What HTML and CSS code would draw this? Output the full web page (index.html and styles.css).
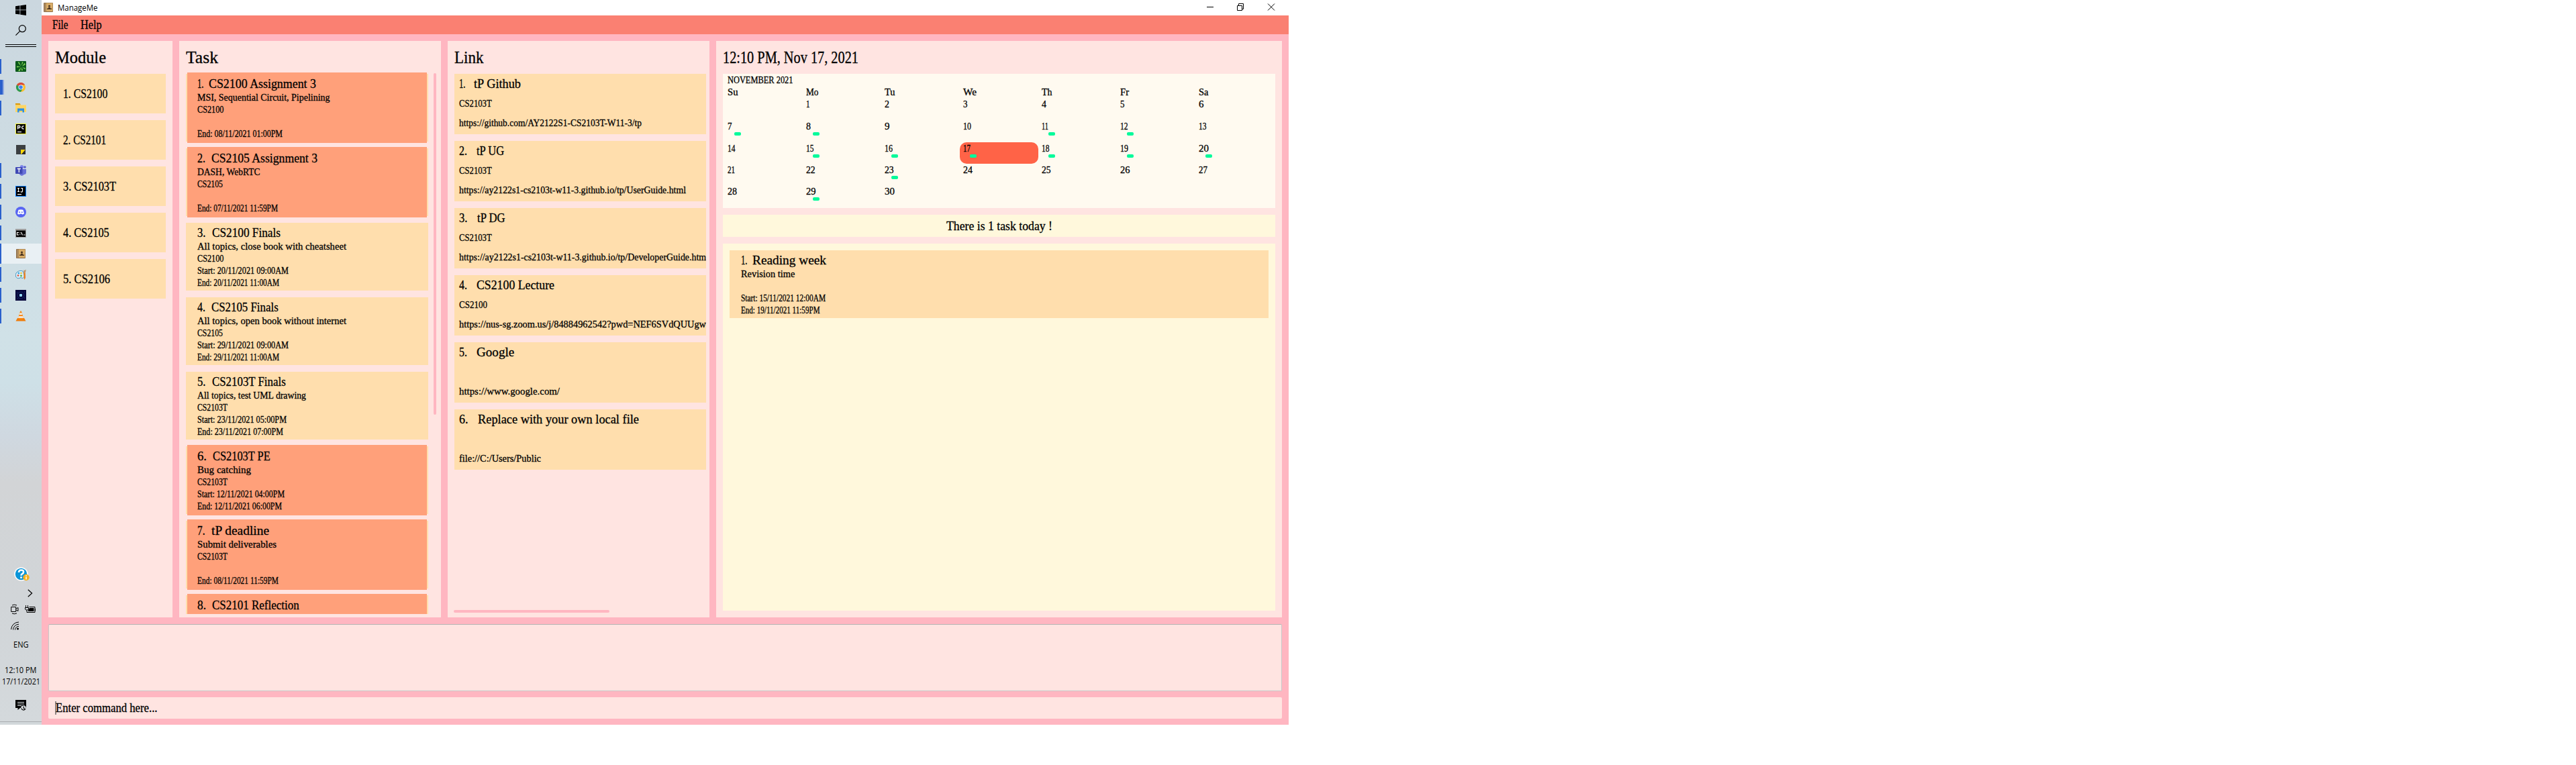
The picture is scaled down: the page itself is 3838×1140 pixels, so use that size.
FILE: index.html
```html
<!DOCTYPE html>
<html lang="en">
<head>
<meta charset="utf-8">
<title>ManageMe</title>
<link rel="stylesheet" href="styles.css">
</head>
<body>
<svg width="0" height="0" class="defs">
  <symbol id="book" viewBox="0 0 14 14"><rect width="14" height="14" rx="1" fill="#8a6a45"/><rect x="1" y="0.5" width="2" height="13" fill="#a98960"/><rect x="3.5" y="0.5" width="10" height="12.5" fill="#d9ad68"/><circle cx="8.5" cy="5" r="1.6" fill="#4a3420"/><path d="M5 10V8.400h2V7h3v1.400h2V10z" fill="#4a3420"/></symbol>
</svg>
<div class="screen">
  <aside class="taskbar">
    <svg class="win" viewBox="0 0 16 16"><path d="M0 2.200 6.500 1.300V7.500H0zM7.300 1.200 16 0v7.500H7.300zM0 8.300h6.500v6.300L0 13.700zM7.300 8.300H16V16l-8.700-1.200z"/></svg>
    <svg class="search" viewBox="0 0 16 16" fill="none" stroke="#000" stroke-width="1.200"><circle cx="10.300" cy="5.700" r="5"/><path d="M6.700 9.300.4 15.600"/></svg>
    <div class="grip"></div>
    <div class="apps">
      <div class="app run"><svg viewBox="0 0 16 16"><rect width="16" height="16" rx="1" fill="#0d5a1c"/><path d="M4 2.500 8.500 8 5 .8zM2 7.500l6 1-6 1zM4 14.500 8.500 9l-2 6zM9 14l.3-5 1.700 5zM14.500 12.500 10 9l4.800 1.500zM15 5l-5 3 3.500-5zM9 7 10 1l1.500 1z" fill="#86d957"/></svg></div>
      <div class="app run more"><svg viewBox="0 0 16 16"><circle cx="8" cy="8" r="7" fill="#fbc02d"/><path d="M8 8 1.900 4.500A7 7 0 0 1 14.100 4.500H8z" fill="#d9483b"/><path d="M1.900 4.500A7 7 0 0 0 8 15l3-5.300L8 8z" fill="#2a9a55"/><circle cx="8" cy="8" r="3.600" fill="#fff"/><circle cx="8" cy="8" r="2.800" fill="#3f83f0"/></svg></div>
      <div class="app run"><svg viewBox="0 0 16 16"><path d="M0 1h6.500l1.500 2.500H0z" fill="#dc9a08"/><path d="M0 3.500h16V14H0z" fill="#ffd563"/><path d="M3 14.500V8.500h10v6h-2.500V12h-5v2.500z" fill="#2f8fe0"/></svg></div>
      <div class="app"><svg viewBox="0 0 16 16"><rect x=".5" y=".5" width="15" height="15" stroke="#f3f03a"/><path d="M3.500 8.500v-5h2a1.400 1.400 0 0 1 0 3h-2M12.500 4.200a2 2 0 1 0 0 3.600" stroke="#fff" fill="none" stroke-width="1.300"/><path d="M3 12h6v1.200H3z" fill="#fff"/></svg></div>
      <div class="app"><svg viewBox="0 0 16 16"><path d="M1 1h14v14H1z" fill="#3c3f41"/><path d="M8 8h7l-5.500 6.500H8z" fill="#ffd60a"/><path d="m15 8-6 7h6z" fill="#2b2b2b"/></svg></div>
      <div class="app run"><svg viewBox="0 0 16 16"><circle cx="14" cy="3" r="1.800" fill="#5059c9"/><circle cx="9.500" cy="2.800" r="2.700" fill="#7b83eb"/><path d="M7 6h9v5a3 3 0 0 1-3 3q-2 2-4 2l-3-2z" fill="#6870d6"/><rect y="3" width="10.500" height="10" rx=".8" fill="#4049b5"/><path d="M2.800 5.500h5M5.300 5.500v5.500" stroke="#fff" stroke-width="1.300"/></svg></div>
      <div class="app run"><svg viewBox="0 0 16 16"><rect x=".5" y=".5" width="15" height="15" stroke="#087cfa"/><path d="M3 3.500h3M4.500 3.500v5M3 8.500h3M8 3.500h2.500v3.800a1.300 1.300 0 0 1-2.600 1" stroke="#fff" fill="none" stroke-width="1.200"/><path d="M3 12h6v1.200H3z" fill="#fff"/></svg></div>
      <div class="app run"><svg viewBox="0 0 16 16"><circle cx="8" cy="8" r="8" fill="#5865f2"/><path d="M4.500 4.700Q8 3.800 11.500 4.700L13 10.500l-2.500 1.200-.8-1H6.300l-.8 1L3 10.500z" fill="#fff"/><circle cx="6.200" cy="8.200" r="1" fill="#5865f2"/><circle cx="9.800" cy="8.200" r="1" fill="#5865f2"/></svg></div>
      <div class="app run"><svg viewBox="0 0 16 16"><path d="M0 2h16v13H0z" fill="#a0a0a0"/><path d="M1 4.500h14V14H1z"/><path d="M5 7.500H2.500V11H5M6.800 7.500v1m0 1.500v1M8.500 7l2 4.500M12 11h2.500" stroke="#fff" fill="none" stroke-width="1.100"/></svg></div>
      <div class="app run active"><svg viewBox="-1 -1 16 16"><use href="#book" width="14" height="14"/></svg></div>
      <div class="app run"><svg viewBox="0 0 16 16"><path d="M1 6q4-5 10-3l2 6q1 4-3 4.500-2-2-4 0-4 1-5.500-2.500Q0 8 1 6z" fill="#d9eef8" stroke="#4f9ac2"/><circle cx="4" cy="9.500" r="1.300" fill="#e24a33"/><circle cx="8.500" cy="6" r="1.300" fill="#f2c230"/><circle cx="4.800" cy="6" r="1.300" fill="#2e9cd6"/><circle cx="8.500" cy="10" r="1.400" fill="#5fae3b"/><path d="m12.600 5-.3-3.500L14 2l1.500-1.500V3l-1 2z" fill="#c09060"/><path d="M12.500 5h2.200l.3 8-1.500 3-1-3z" fill="#ee7d1c"/></svg></div>
      <div class="app run"><svg viewBox="0 0 16 16"><path d="M0 0h16v16H0z" fill="#05063a"/><circle cx="8" cy="8" r="5" fill="none" stroke="#1d3a78" stroke-width=".7"/><path d="M2 4h1M13 3h1M3 13h1M13 12h1" stroke="#2b4a88"/><rect x="6" y="6" width="4" height="4" rx="1" fill="#8fd8f4"/></svg></div>
      <div class="app run"><svg viewBox="0 0 16 16"><path d="M3 11h10l2.500 4.500H.5z" fill="#ef7c0a"/><path d="M7.200.5h1.600L12.500 12q-4.500 2-9 0z" fill="#f58a1a"/><path d="M6.500 3.500h3l.9 2.500H5.600zM4.700 8.200h6.600l.8 2.600H3.900z" fill="#f2f2f2"/></svg></div>
    </div>
    <div class="tray">
      <svg class="help" viewBox="0 0 23 22"><circle cx="10.500" cy="10.500" r="10.300" fill="#fff"/><circle cx="10.500" cy="10.500" r="8.700" fill="#0a95d8"/><path d="M7 8q0-3.500 3.700-3.500T14 7.500q0 1.800-2 2.700-1.500.8-1.500 2.500" fill="none" stroke="#fff" stroke-width="2.600"/><circle cx="10.500" cy="15.600" r="1.500" fill="#fff"/><circle cx="18" cy="15.500" r="4.700" fill="#f5b01e"/><path d="M18 14.500v4M18 12v1.500" stroke="#fff" stroke-width="1.500"/></svg>
      <svg class="chev" viewBox="0 0 8 12" fill="none" stroke="#000" stroke-width="1.200"><path d="m.8.800 5.800 5.200L.8 11.200"/></svg>
      <div class="pair">
        <svg width="12" height="16" viewBox="0 0 12 16" fill="none" stroke="#000"><path d="M2 2Q5 .2 9 2M2 14q3 1.800 7 0M.7 4.500h7v7h-7zM8 7l3-1.500v5L8 9"/></svg>
        <svg width="17" height="12" viewBox="0 0 17 12"><path d="M1.500 0v3m3-3v3M.5 3.500h5V6L4 7H2L.5 6zM3 7v3.500h3" fill="none" stroke="#000"/><path d="M6.500 2.500h8.500v8H5.500M15.500 5v3.500" fill="none" stroke="#000"/><path d="M7 4h6.500v5H5V7z"/></svg>
      </div>
      <svg class="wifi" viewBox="0 0 13 13" fill="none" stroke="#000"><path d="M.6 12A11.500 11.500 0 0 1 12 1M3.600 12.500A8.500 8.500 0 0 1 12 4.200M6.500 12.600A5.500 5.500 0 0 1 12 7.300"/><circle cx="10.500" cy="11" r="1.500" fill="#000" stroke="none"/></svg>
      <div class="lang"><span data-w="22.500">ENG</span></div>
      <div class="clock"><span data-w="47.500">12:10 PM</span></div>
      <div class="clock"><span data-w="57">17/11/2021</span></div>
      <svg class="note" viewBox="0 0 16 16"><path d="M0 0h16v12H7l-3.500 3V12H0z"/><path d="M3 3.500h10M3 6h10M3 8.500h6" stroke="#d3d8db"/><circle cx="12" cy="12" r="3.800" fill="#d3d8db"/><path d="M9 12.500a3 3 0 0 0 5.500 1.200Q12 13.800 12.200 9.600" fill="none" stroke="#000" stroke-width="1.200"/></svg>
    </div>
  </aside>
  <main class="window">
    <header class="titlebar">
      <svg class="logo"><use href="#book" width="14" height="14"/></svg>
      <div class="name"><span data-w="59.500">ManageMe</span></div>
      <svg class="ctl" viewBox="0 0 102 12" fill="none" stroke="#000"><path d="M0 6.500h10M45.500 4.500h7v7h-7zM47.500 4.500v-3h7v8h-2M91 1.500l10 10M101 1.500l-10 10"/></svg>
    </header>
    <nav class="menu"><span data-w="23.500">File</span><span data-w="31.500">Help</span></nav>
    <div class="panels">
      <section class="panel modules">
        <h2><span data-w="76">Module</span></h2>
        <div class="list">
          <div class="module"><span data-w="66.300">1. CS2100</span></div>
          <div class="module"><span data-w="64">2. CS2101</span></div>
          <div class="module"><span data-w="79">3. CS2103T</span></div>
          <div class="module"><span data-w="68.700">4. CS2105</span></div>
          <div class="module"><span data-w="70">5. CS2106</span></div>
        </div>
      </section>
      <section class="panel tasks">
        <h2><span data-w="48">Task</span></h2>
        <div class="scroll">
          <div class="list">
            <article class="task late"><h3><span data-w="8">1.</span><span data-w="160">CS2100 Assignment 3</span></h3><p class="desc"><span data-w="197.500">MSI, Sequential Circuit, Pipelining</span></p><p><span data-w="39.500">CS2100</span></p><p></p><p><span data-w="127">End: 08/11/2021 01:00PM</span></p></article>
            <article class="task late"><h3><span data-w="12">2.</span><span data-w="158">CS2105 Assignment 3</span></h3><p class="desc"><span data-w="93.500">DASH, WebRTC</span></p><p><span data-w="38">CS2105</span></p><p></p><p><span data-w="120">End: 07/11/2021 11:59PM</span></p></article>
            <article class="task"><h3><span data-w="12.500">3.</span><span data-w="102">CS2100 Finals</span></h3><p class="desc"><span data-w="222">All topics, close book with cheatsheet</span></p><p><span data-w="39.500">CS2100</span></p><p><span data-w="136">Start: 20/11/2021 09:00AM</span></p><p><span data-w="122">End: 20/11/2021 11:00AM</span></p></article>
            <article class="task"><h3><span data-w="12">4.</span><span data-w="99.700">CS2105 Finals</span></h3><p class="desc"><span data-w="222">All topics, open book without internet</span></p><p><span data-w="38">CS2105</span></p><p><span data-w="136">Start: 29/11/2021 09:00AM</span></p><p><span data-w="122">End: 29/11/2021 11:00AM</span></p></article>
            <article class="task"><h3><span data-w="12.500">5.</span><span data-w="109.700">CS2103T Finals</span></h3><p class="desc"><span data-w="162">All topics, test UML drawing</span></p><p><span data-w="45">CS2103T</span></p><p><span data-w="133">Start: 23/11/2021 05:00PM</span></p><p><span data-w="128">End: 23/11/2021 07:00PM</span></p></article>
            <article class="task late"><h3><span data-w="14">6.</span><span data-w="85.700">CS2103T PE</span></h3><p class="desc"><span data-w="80">Bug catching</span></p><p><span data-w="45">CS2103T</span></p><p><span data-w="130">Start: 12/11/2021 04:00PM</span></p><p><span data-w="126">End: 12/11/2021 06:00PM</span></p></article>
            <article class="task late"><h3><span data-w="11.500">7.</span><span data-w="86">tP deadline</span></h3><p class="desc"><span data-w="118">Submit deliverables</span></p><p><span data-w="45">CS2103T</span></p><p></p><p><span data-w="121">End: 08/11/2021 11:59PM</span></p></article>
            <article class="task late"><h3><span data-w="13">8.</span><span data-w="129.700">CS2101 Reflection</span></h3></article>
          </div>
          <div class="vbar"></div>
        </div>
      </section>
      <section class="panel links">
        <h2><span data-w="43.500">Link</span></h2>
        <div class="list">
          <article class="link"><h3><span data-w="8">1.</span><span data-w="70">tP Github</span></h3><p class="mod"><span data-w="48.700">CS2103T</span></p><p><span data-w="272">https://github.com/AY2122S1-CS2103T-W11-3/tp</span></p></article>
          <article class="link"><h3><span data-w="12">2.</span><span data-w="41.300">tP UG</span></h3><p class="mod"><span data-w="48.700">CS2103T</span></p><p><span data-w="338">https://ay2122s1-cs2103t-w11-3.github.io/tp/UserGuide.html</span></p></article>
          <article class="link"><h3><span data-w="12.500">3.</span><span data-w="41.700">tP DG</span></h3><p class="mod"><span data-w="48.700">CS2103T</span></p><p><span data-w="372">https://ay2122s1-cs2103t-w11-3.github.io/tp/DeveloperGuide.html</span></p></article>
          <article class="link"><h3><span data-w="12">4.</span><span data-w="116">CS2100 Lecture</span></h3><p class="mod"><span data-w="42">CS2100</span></p><p><span data-w="368">https://nus-sg.zoom.us/j/84884962542?pwd=NEF6SVdQUUgw</span></p></article>
          <article class="link"><h3><span data-w="12">5.</span><span data-w="56.300">Google</span></h3><p class="mod"></p><p><span data-w="150">https://www.google.com/</span></p></article>
          <article class="link"><h3><span data-w="13.500">6.</span><span data-w="240">Replace with your own local file</span></h3><p class="mod"></p><p><span data-w="122">file://C:/Users/Public</span></p></article>
        </div>
        <div class="hbar"></div>
      </section>
      <section class="panel today">
        <h2><span data-w="202">12:10 PM, Nov 17, 2021</span></h2>
        <div class="calendar">
          <div class="month"><span data-w="97.500">NOVEMBER 2021</span></div>
          <div class="week head"><div><span data-w="15.500">Su</span></div><div><span data-w="18.500">Mo</span></div><div><span data-w="15.500">Tu</span></div><div><span data-w="20">We</span></div><div><span data-w="15.500">Th</span></div><div><span data-w="13">Fr</span></div><div><span data-w="14.500">Sa</span></div></div>
          <div class="week tall"><div></div><div><span data-w="5.500">1</span></div><div><span data-w="7">2</span></div><div><span data-w="6.500">3</span></div><div><span data-w="7">4</span></div><div><span data-w="6.500">5</span></div><div><span data-w="7.500">6</span></div></div>
          <div class="week tall"><div class="busy"><span data-w="6.500">7</span></div><div class="busy"><span data-w="7">8</span></div><div><span data-w="7.500">9</span></div><div><span data-w="12">10</span></div><div class="busy"><span data-w="9">11</span></div><div class="busy"><span data-w="11.500">12</span></div><div><span data-w="11.500">13</span></div></div>
          <div class="week"><div><span data-w="11.500">14</span></div><div class="busy"><span data-w="11.500">15</span></div><div class="busy"><span data-w="12">16</span></div><div class="busy now"><span data-w="11">17</span></div><div class="busy"><span data-w="11.500">18</span></div><div class="busy"><span data-w="12">19</span></div><div class="busy"><span data-w="15">20</span></div></div>
          <div class="week"><div><span data-w="11">21</span></div><div><span data-w="13.700">22</span></div><div class="busy"><span data-w="13.700">23</span></div><div><span data-w="14">24</span></div><div><span data-w="13.700">25</span></div><div><span data-w="14.500">26</span></div><div><span data-w="13">27</span></div></div>
          <div class="week"><div><span data-w="14">28</span></div><div class="busy"><span data-w="14.500">29</span></div><div><span data-w="15">30</span></div><div></div><div></div><div></div><div></div></div>
        </div>
        <div class="notice"><span data-w="158">There is 1 task today !</span></div>
        <div class="agenda">
          <article class="task"><h3><span data-w="8">1.</span><span data-w="110">Reading week</span></h3><p class="desc"><span data-w="80.300">Revision time</span></p><p></p><p><span data-w="126">Start: 15/11/2021 12:00AM</span></p><p><span data-w="117.500">End: 19/11/2021 11:59PM</span></p></article>
        </div>
      </section>
    </div>
    <div class="result"></div>
    <div class="command"><i class="caret"></i><span data-w="151.500">Enter command here...</span></div>
  </main>
</div>
<script src="fit.js"></script>
</body>
</html>
```
FILE: fit.js
```js
// Condense each label to the width given in its data-w attribute,
// but never squeeze the glyphs below two thirds of their natural width.
document.querySelectorAll('[data-w]').forEach(function (el) {
  var natural = el.getBoundingClientRect().width;
  var target = parseFloat(el.dataset.w);
  el.style.transform = 'scaleX(' + Math.max(target / natural, 0.67) + ')';
  el.style.marginRight = (target - natural) + 'px';
});
```
FILE: styles.css
```css
* { box-sizing: border-box; margin: 0; padding: 0; }
body { background: #fff; font-family: "Liberation Serif", serif; font-size: 15px; color: #000; }
.defs { display: block; }
[data-w] { display: inline-block; white-space: pre; transform-origin: 0 50%; flex: none; }

.screen { display: flex; width: 1920px; height: 1080px; }

.taskbar {
  width: 62px; display: flex; flex-direction: column; flex: none;
  background: linear-gradient(#cbd7df 0, #cddbe2 200px, #d0e1e7 500px, #cee0e7 570px, #cfd8e0 650px, #d2d4d6 720px, #d1d5d8 900px, #d4d9dc 1075px, #a9adb0 1075px, #a9adb0 1076px, #d2d8db 1076px);
  font-family: "Open Sans", "Noto Sans", sans-serif; font-size: 12px;
}
.win, .search { display: block; width: 16px; height: 16px; margin-left: 23px; flex: none; }
.win { margin-top: 7px; }
.search { margin-top: 14px; }
.grip { width: 46px; height: 4px; margin: 13px 0 13px 8px; border-top: 1px solid #000; border-bottom: 1px solid #000; }
.app { display: flex; height: 31px; padding: 8px 0 0 23px; position: relative; }
.app svg { width: 16px; height: 16px; }
.app.run::before { content: ""; position: absolute; left: 0; top: 5px; width: 2px; height: 22px; background: #2a60cc; }
.app.more::before { width: 4px; border-right: 2px solid #8fa8de; }
.app.active { background: linear-gradient(#e9f0f4, #e9f0f4) 0 1px / 100% 30px no-repeat; }
.app.active::before { top: 1px; height: 30px; }
.tray { display: flex; flex-direction: column; margin-top: 359px; }
.tray svg { display: block; flex: none; }
.help { width: 23px; height: 22px; margin-left: 21px; }
.chev { width: 8px; height: 12px; margin: 11px 0 0 41px; }
.pair { display: flex; gap: 9px; height: 16px; margin: 10px 0 0 16px; align-items: center; }
.wifi { width: 13px; height: 13px; margin: 10px 0 0 16px; }
.lang { height: 17px; line-height: 17px; margin-top: 13px; display: flex; justify-content: center; }
.clock { height: 17px; line-height: 17px; display: flex; justify-content: center; }
.lang + .clock { margin-top: 21px; }
.note { width: 16px; height: 16px; margin: 19px 0 0 23px; }

.window { width: 1858px; background: #ffb6c1; display: flex; flex-direction: column; }
.titlebar { height: 23px; background: #fff; display: flex; align-items: flex-start; padding: 4px 20px 0 3px; }
.logo { width: 14px; height: 14px; }
.name { font: 12px/16px "Open Sans", sans-serif; margin: 0 auto 0 6.500px; }
.ctl { width: 102px; height: 12px; }
.menu, .panels, .command { -webkit-text-stroke: 0.3px #000; }
.menu { height: 28px; background: #fa8072; display: flex; align-items: center; gap: 18.500px; padding-left: 16px; font-size: 18px; }

.panels { display: flex; gap: 10px; margin: 10px; height: 859px; flex: none; }
.panel { background: #ffe4e1; padding: 0 10px; display: flex; flex-direction: column; }
.modules { width: 185px; }
.tasks, .links { width: 390px; }
.today { width: 843px; }
h2 { font-size: 25px; font-weight: 400; line-height: 49px; height: 49px; display: flex; flex: none; }
h3 { font-size: 19px; font-weight: 400; line-height: 22px; display: flex; gap: 9.300px; }
.list { display: flex; flex-direction: column; gap: 10px; }

.module { height: 59px; background: #ffdead; padding-left: 12px; display: flex; align-items: center; font-size: 19px; }

.tasks { padding-right: 7px; }
.scroll { display: flex; height: 807px; margin-top: -2px; padding-top: 2px; overflow: hidden; gap: 8px; }
.scroll .list { width: 361px; flex: none; }
.vbar { width: 4px; height: 509px; flex: none; margin-top: -1px; border-radius: 2px; background: #ffb6c1; }
.task { height: 101px; flex: none; background: #ffdead; padding: 4px 0 0 17px; }
.task p { height: 18px; line-height: 19px; font-size: 14.700px; display: flex; }
.task .desc { font-size: 15.500px; line-height: 18px; }
.task.late { position: relative; z-index: 0; }
.task.late::before { content: ""; position: absolute; z-index: -1; inset: -2px 2px; background: #ffa07a; }

.links { padding-right: 5px; }
.link { height: 90px; background: #ffdead; padding: 4px 0 0 7px; overflow: hidden; font-size: 15.500px; }
.link h3 { gap: 14.200px; }
.link p { height: 20px; line-height: 20px; margin-top: 8.500px; display: flex; }
.link .mod { margin-top: 8px; }
.hbar { width: 232px; height: 4px; margin: auto 0 7px -1px; border-radius: 2px; background: #ffb6c1; }

.calendar { height: 200px; background: #fffaf0; padding-left: 2px; font-size: 15.300px; }
.month { height: 18px; line-height: 18px; padding-left: 5px; }
.week { display: grid; grid-template-columns: repeat(7, 117px); height: 32px; line-height: 18px; }
.week.head { height: 18px; }
.week.tall { height: 33px; }
.week > div { padding-left: 5px; position: relative; }
.busy::after { content: ""; position: absolute; left: 15px; top: 18px; width: 10px; height: 5px; border-radius: 2px; background: #00fa9a; }
.now { background: #ff6347; border-radius: 10px; }
.notice { height: 33px; margin: 10px 0; background: #fff8dc; display: flex; align-items: center; justify-content: center; font-size: 18.700px; }
.agenda { height: 547px; background: #fff8dc; padding: 10px; }

.result { height: 100px; margin: 0 10px; background: #ffe4e1; border: 1px solid #c8c8c8; border-top-color: #b4b4b4; border-radius: 2px; }
.command { height: 32px; margin: 9px 10px 0; background: #ffe4e1; border-radius: 2px; display: flex; align-items: center; padding-left: 10px; font-size: 18px; }
.caret { width: 2px; height: 20px; background: #8f8683; margin-right: -1px; }
```
